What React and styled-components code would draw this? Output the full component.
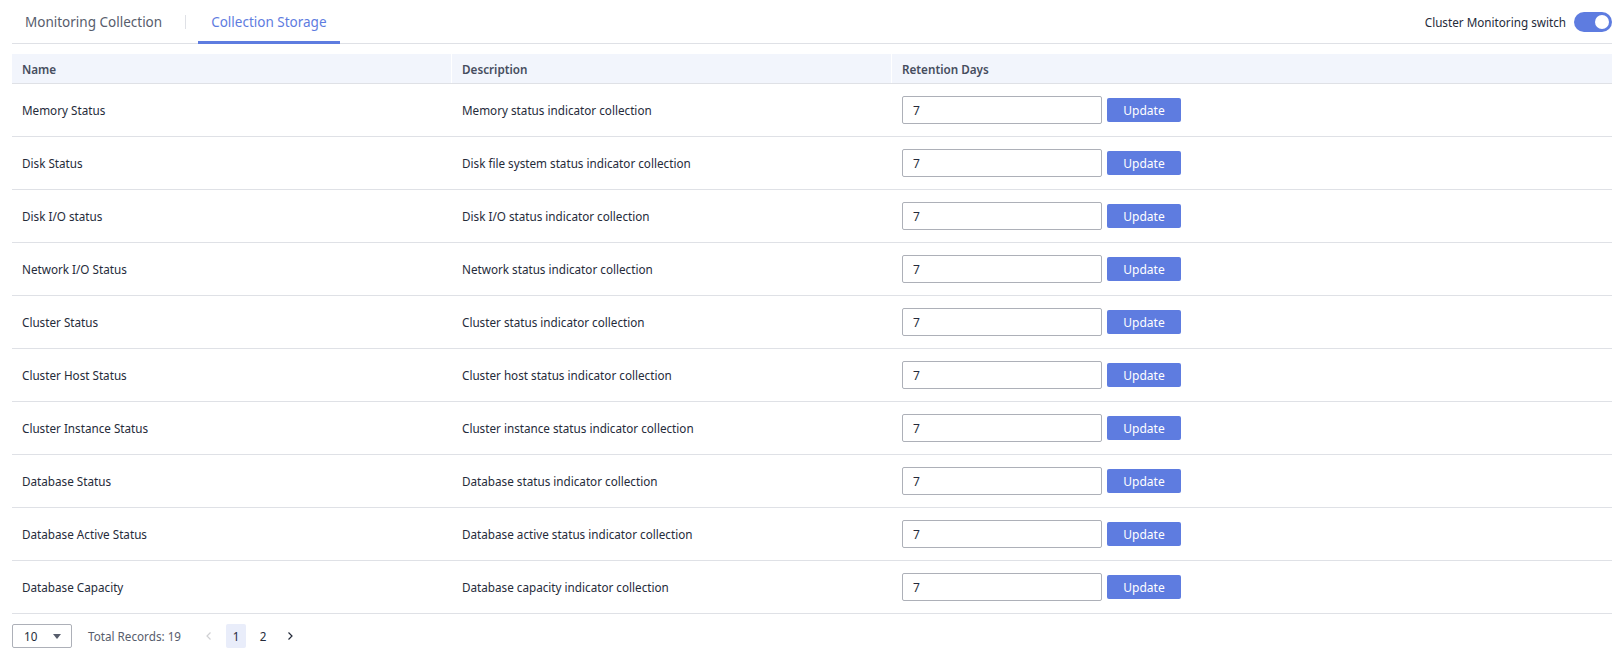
import React, { useState } from 'react';
import styled, { createGlobalStyle } from 'styled-components';

const GlobalStyle = createGlobalStyle`
  body {
    margin: 0;
    background: #ffffff;
    font-family: 'Noto Sans', 'Liberation Sans', Arial, sans-serif;
    color: #252b3a;
  }
`

const Page = styled.div`
  width: 1600px;
  padding: 0 9px 0 12px;
`

const TopBar = styled.div`
  display: flex;
  align-items: flex-end;
  justify-content: space-between;
  height: 44px;
  border-bottom: 1px solid #dfe1e6;
  box-sizing: border-box;
`

const Tabs = styled.div`
  display: flex;
  align-items: flex-end;
  height: 100%;
`

const Tab = styled.div`
  position: relative;
  display: flex;
  align-items: center;
  height: 100%;
  padding: 0 13px;
  font-size: 13.5px;
  color: ${props => props.active ? '#5e7ce0' : '#575d6c'};
  cursor: pointer;
  &::after {
    content: '';
    position: absolute;
    left: 0;
    right: 0;
    bottom: -1px;
    height: 3px;
    background: ${props => props.active ? '#5e7ce0' : 'transparent'};
  }
`

const TabDivider = styled.div`
  align-self: center;
  width: 1px;
  height: 14px;
  margin: 0 12px 0 10px;
  background: #dfe1e6;
`

const SwitchWrap = styled.div`
  display: flex;
  align-items: center;
  gap: 8px;
  align-self: center;
  font-size: 11.7px;
  color: #252b3a;
`

const Switch = styled.div`
  position: relative;
  width: 38px;
  height: 20px;
  border-radius: 10px;
  background: ${props => props.on ? '#5e7ce0' : '#adb0b8'};
  &::after {
    content: '';
    position: absolute;
    top: 3px;
    left: ${props => props.on ? '21px' : '3px'};
    width: 14px;
    height: 14px;
    border-radius: 50%;
    background: #ffffff;
  }
`

const Table = styled.div`
  margin-top: 10px;
`

const Grid = styled.div`
  display: grid;
  grid-template-columns: 439px 440px 1fr;
  border-bottom: 1px solid #dfe1e6;
`

const HeadRow = styled(Grid)`
  height: 30px;
  background: #f2f5fc;
  box-sizing: border-box;
`

const HeadCell = styled.div`
  display: flex;
  align-items: center;
  padding: 0 10px;
  font-size: 11.7px;
  font-weight: 600;
  color: #464d5e;
  border-left: ${props => props.first ? 'none' : '1px solid #ffffff'};
`

const Row = styled(Grid)`
  height: 53px;
  box-sizing: border-box;
`

const Cell = styled.div`
  display: flex;
  align-items: center;
  padding: 0 10px;
  font-size: 11.7px;
  color: #252b3a;
  padding-left: ${props => props.first ? '10px' : '11px'};
`

const DaysInput = styled.input`
  width: 200px;
  height: 28px;
  padding: 0 10px;
  border: 1px solid #adb0b8;
  border-radius: 2px;
  font-family: inherit;
  font-size: 12px;
  color: #252b3a;
  box-sizing: border-box;
  outline: none;
`

const UpdateButton = styled.button`
  margin-left: 5px;
  width: 74px;
  height: 24px;
  border: none;
  border-radius: 2px;
  background: #5e7ce0;
  color: #ffffff;
  font-family: inherit;
  font-size: 12px;
  cursor: pointer;
`

const Pager = styled.div`
  display: flex;
  align-items: center;
  padding-top: 10px;
  font-size: 11.7px;
  color: #575d6c;
`

const SizeSelect = styled.div`
  display: flex;
  align-items: center;
  justify-content: space-between;
  width: 60px;
  height: 24px;
  padding: 0 10px 0 11px;
  border: 1px solid #adb0b8;
  border-radius: 2px;
  box-sizing: border-box;
  color: #252b3a;
`

const Caret = styled.span`
  width: 0;
  height: 0;
  border-left: 4px solid transparent;
  border-right: 4px solid transparent;
  border-top: 5px solid #575d6c;
`

const Total = styled.span`
  margin: 0 18px 0 16px;
`

const PageBtn = styled.div`
  display: flex;
  align-items: center;
  justify-content: center;
  min-width: 20px;
  height: 24px;
  margin-right: 7px;
  border-radius: 2px;
  background: ${props => props.active ? '#e9edfa' : 'transparent'};
  color: ${props => props.muted ? '#cfd0d3' : '#252b3a'};
`

const rows = [
  ['Memory Status', 'Memory status indicator collection'],
  ['Disk Status', 'Disk file system status indicator collection'],
  ['Disk I/O status', 'Disk I/O status indicator collection'],
  ['Network I/O Status', 'Network status indicator collection'],
  ['Cluster Status', 'Cluster status indicator collection'],
  ['Cluster Host Status', 'Cluster host status indicator collection'],
  ['Cluster Instance Status', 'Cluster instance status indicator collection'],
  ['Database Status', 'Database status indicator collection'],
  ['Database Active Status', 'Database active status indicator collection'],
  ['Database Capacity', 'Database capacity indicator collection'],
]

const Chevron = ({ dir }) => (
  <svg width="10" height="10" viewBox="0 0 10 10" fill="none">
    <path
      d={dir === 'left' ? 'M6.5 1.5 3 5l3.5 3.5' : 'M3.5 1.5 7 5 3.5 8.5'}
      stroke="currentColor"
      strokeWidth="1.2"
    />
  </svg>
)

const App = () => {
  const [days, setDays] = useState(rows.map(() => '7'))

  return (
    <>
      <GlobalStyle />
      <Page>
        <TopBar>
          <Tabs>
            <Tab>Monitoring Collection</Tab>
            <TabDivider />
            <Tab active>Collection Storage</Tab>
          </Tabs>
          <SwitchWrap>
            Cluster Monitoring switch
            <Switch on />
          </SwitchWrap>
        </TopBar>

        <Table>
          <HeadRow>
            <HeadCell first>Name</HeadCell>
            <HeadCell>Description</HeadCell>
            <HeadCell>Retention Days</HeadCell>
          </HeadRow>
          {rows.map(([name, desc], i) => (
            <Row key={name}>
              <Cell first>{name}</Cell>
              <Cell>{desc}</Cell>
              <Cell>
                <DaysInput
                  value={days[i]}
                  onChange={e => setDays(days.map((d, j) => j === i ? e.target.value : d))}
                />
                <UpdateButton>Update</UpdateButton>
              </Cell>
            </Row>
          ))}
        </Table>

        <Pager>
          <SizeSelect>10<Caret /></SizeSelect>
          <Total>Total Records: 19</Total>
          <PageBtn muted><Chevron dir="left" /></PageBtn>
          <PageBtn active>1</PageBtn>
          <PageBtn>2</PageBtn>
          <PageBtn><Chevron dir="right" /></PageBtn>
        </Pager>
      </Page>
    </>
  )
}

export default App;
